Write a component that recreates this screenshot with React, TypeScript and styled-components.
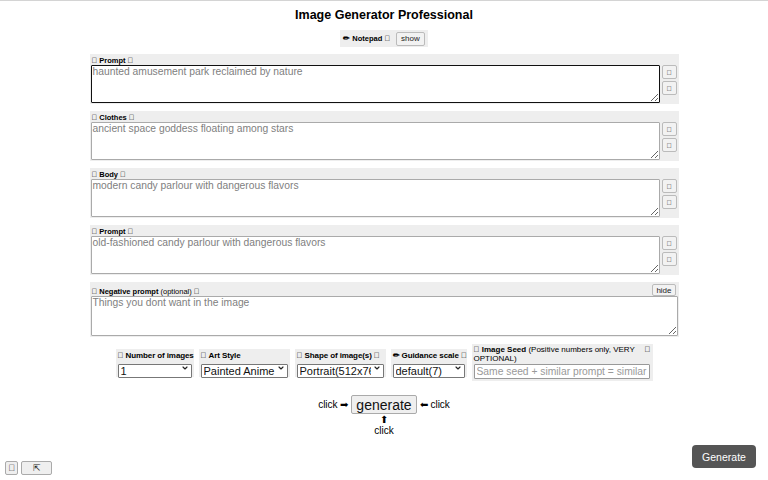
import React from "react";
import styled, { createGlobalStyle } from "styled-components";
import { ChevronDown } from "lucide-react";

const GlobalStyle = createGlobalStyle`
  html, body {
    margin: 0;
    padding: 0;
    background: #fff;
    font-family: "Liberation Sans", Arial, sans-serif;
    color: #000;
  }
  * { box-sizing: border-box; }
`;

// glyph with no font coverage, drawn as an empty box like in the reference
const T = "\uE000";

const Page = styled.div`
  width: 768px;
  height: 480px;
  border-top: 1px solid #d4d4d4;
  position: relative;
  overflow: hidden;
`;

const Title = styled.h1`
  margin: 0;
  padding-top: 7px;
  font-size: 12.5px;
  font-weight: bold;
  text-align: center;
  line-height: 15px;
`;

const NotepadRow = styled.div`
  display: flex;
  justify-content: center;
  margin-top: 7px;
`;

const NotepadBox = styled.div`
  display: flex;
  align-items: center;
  gap: 6px;
  background: #eee;
  padding: 1px 3px;
  height: 17px;
  font-size: 7.5px;
  font-weight: bold;
`;

const SmallButton = styled.button`
  font-family: "Liberation Sans", Arial, sans-serif;
  font-size: 8px;
  background: #f2f2f2;
  border: 1px solid #bbb;
  border-radius: 2px;
  padding: 1px 4px;
  color: #222;
  line-height: 10px;
`;

const Sections = styled.div`
  width: 589px;
  margin: 7px auto 0;
  display: flex;
  flex-direction: column;
  gap: 7px;
`;

const Section = styled.div`
  background: #eee;
  padding: 1px;
`;

const LabelRow = styled.div`
  display: flex;
  justify-content: space-between;
  align-items: flex-end;
  font-size: 7.5px;
  font-weight: bold;
  height: 10px;
  line-height: 9px;
  padding-left: 1px;
`;

const Optional = styled.span`
  font-weight: normal;
`;

const InputRow = styled.div`
  display: flex;
  gap: 2px;
`;

const TextArea = styled.textarea<{ $focused?: boolean }>`
  flex: 1;
  width: 100%;
  height: 38px;
  resize: vertical;
  font-family: "Liberation Sans", Arial, sans-serif;
  font-size: 10.3px;
  line-height: 12px;
  padding: 0 1px;
  margin: 0;
  display: block;
  border: ${(p) => (p.$focused ? "1.5px solid #111" : "1px solid #aaa")};
  border-radius: 1px;
  outline: none;
  background: #fff;
  &::placeholder {
    color: #808080;
  }
`;

const SideButtons = styled.div`
  display: flex;
  flex-direction: column;
  gap: 2px;
  width: 16px;
`;

const IconButton = styled.button`
  width: 15px;
  height: 14px;
  padding: 0;
  font-size: 7px;
  background: #f2f2f2;
  border: 1px solid #bbb;
  border-radius: 2px;
  color: #222;
`;

const HideButton = styled(SmallButton)`
  padding: 1px 3px;
  height: 12px;
`;

const NegSection = styled(Section)`
  padding-top: 2px;
`;

const NegLabelRow = styled(LabelRow)`
  height: 12px;
  padding-right: 2px;
`;

const NegTextArea = styled(TextArea)`
  height: 40px;
`;

const Settings = styled.div`
  display: flex;
  justify-content: center;
  align-items: center;
  gap: 5px;
  margin-top: 7px;
`;

const Setting = styled.div<{ $w: number }>`
  width: ${(p) => p.$w}px;
  background: #eee;
  padding: 2px;
  display: flex;
  flex-direction: column;
  gap: 1px;
`;

const SettingLabel = styled.div`
  font-size: 8px;
  font-weight: bold;
  line-height: 9px;
  white-space: nowrap;
  letter-spacing: -0.1px;
`;

const SeedLabel = styled.div`
  font-size: 8px;
  line-height: 8.5px;
  display: flex;
  justify-content: space-between;
  gap: 2px;
`;

const SelectWrap = styled.div`
  position: relative;
  width: 100%;
  height: 14px;
  svg {
    position: absolute;
    right: 3px;
    top: 3px;
    pointer-events: none;
    color: #222;
  }
`;

const Select = styled.select`
  appearance: none;
  -webkit-appearance: none;
  width: 100%;
  height: 14px;
  font-family: "Liberation Sans", Arial, sans-serif;
  font-size: 11px;
  line-height: 12px;
  padding: 0 12px 0 2px;
  border: 1px solid #777;
  border-radius: 1px;
  background: #fff;
  color: #111;
  white-space: nowrap;
  overflow: hidden;
`;

const SeedInput = styled.input`
  width: 176px;
  height: 15px;
  font-family: "Liberation Sans", Arial, sans-serif;
  font-size: 10.3px;
  padding: 0 2px;
  border: 1px solid #999;
  border-radius: 1px;
  &::placeholder {
    color: #999;
  }
`;

const GenerateRow = styled.div`
  display: flex;
  justify-content: center;
  align-items: center;
  gap: 3px;
  margin-top: 14px;
  font-size: 10px;
`;

const GenerateButton = styled.button`
  font-family: "Liberation Sans", Arial, sans-serif;
  font-size: 14px;
  height: 19px;
  padding: 0 4px;
  line-height: 16px;
  background: #efefef;
  border: 1px solid #aaa;
  border-radius: 2px;
  color: #111;
`;

const BelowHint = styled.div`
  display: flex;
  flex-direction: column;
  align-items: center;
  font-size: 10px;
  line-height: 11px;
`;

const BottomLeft = styled.div`
  position: absolute;
  left: 5px;
  bottom: 5px;
  display: flex;
  gap: 3px;
`;

const CornerButton = styled.button<{ $w: number }>`
  width: ${(p) => p.$w}px;
  height: 14px;
  padding: 0;
  font-size: 9px;
  background: #efefef;
  border: 1px solid #aaa;
  border-radius: 2px;
  color: #222;
`;

const MainGenerate = styled.button`
  position: absolute;
  right: 12px;
  bottom: 12px;
  width: 64px;
  height: 23px;
  background: #555;
  color: #fff;
  border: none;
  border-radius: 4px;
  font-family: "Liberation Sans", Arial, sans-serif;
  font-size: 10.5px;
`;

const prompts = [
  { label: "Prompt", text: "haunted amusement park reclaimed by nature", focused: true },
  { label: "Clothes", text: "ancient space goddess floating among stars" },
  { label: "Body", text: "modern candy parlour with dangerous flavors" },
  { label: "Prompt", text: "old-fashioned candy parlour with dangerous flavors" },
];

function Dropdown({ value }: { value: string }) {
  return (
    <SelectWrap>
      <Select defaultValue={value}>
        <option>{value}</option>
      </Select>
      <ChevronDown size={8} strokeWidth={3.5} />
    </SelectWrap>
  );
}

export default function App() {
  return (
    <Page>
      <GlobalStyle />
      <Title>Image Generator Professional</Title>
      <NotepadRow>
        <NotepadBox>
          <span>✏ Notepad {T}</span>
          <SmallButton>show</SmallButton>
        </NotepadBox>
      </NotepadRow>
      <Sections>
        {prompts.map((p, i) => (
          <Section key={i}>
            <LabelRow>
              {T} {p.label} {T}
            </LabelRow>
            <InputRow>
              <TextArea $focused={p.focused} placeholder={p.text} />
              <SideButtons>
                <IconButton>{T}</IconButton>
                <IconButton>{T}</IconButton>
              </SideButtons>
            </InputRow>
          </Section>
        ))}
        <NegSection>
          <NegLabelRow>
            <span>
              {T} Negative prompt <Optional>(optional)</Optional> {T}
            </span>
            <HideButton>hide</HideButton>
          </NegLabelRow>
          <NegTextArea placeholder="Things you dont want in the image" />
        </NegSection>
      </Sections>
      <Settings>
        <Setting $w={78}>
          <SettingLabel>{T} Number of images</SettingLabel>
          <Dropdown value="1" />
        </Setting>
        <Setting $w={91}>
          <SettingLabel>{T} Art Style</SettingLabel>
          <Dropdown value="Painted Anime Plus" />
        </Setting>
        <Setting $w={91}>
          <SettingLabel>
            {T} Shape of image(s) {T}
          </SettingLabel>
          <Dropdown value="Portrait(512x768px)" />
        </Setting>
        <Setting $w={76}>
          <SettingLabel>✏ Guidance scale {T}</SettingLabel>
          <Dropdown value="default(7)" />
        </Setting>
        <Setting $w={181}>
          <SeedLabel>
            <span>
              <b>{T} Image Seed</b> (Positive numbers only, VERY OPTIONAL)
            </span>
            <span>{T}</span>
          </SeedLabel>
          <SeedInput placeholder="Same seed + similar prompt = similar image" />
        </Setting>
      </Settings>
      <GenerateRow>
        <span>click ➡</span>
        <GenerateButton>generate</GenerateButton>
        <span>⬅ click</span>
      </GenerateRow>
      <BelowHint>
        <span>⬆</span>
        <span>click</span>
      </BelowHint>
      <BottomLeft>
        <CornerButton $w={13}>{T}</CornerButton>
        <CornerButton $w={31}>⇱</CornerButton>
      </BottomLeft>
      <MainGenerate>Generate</MainGenerate>
    </Page>
  );
}
